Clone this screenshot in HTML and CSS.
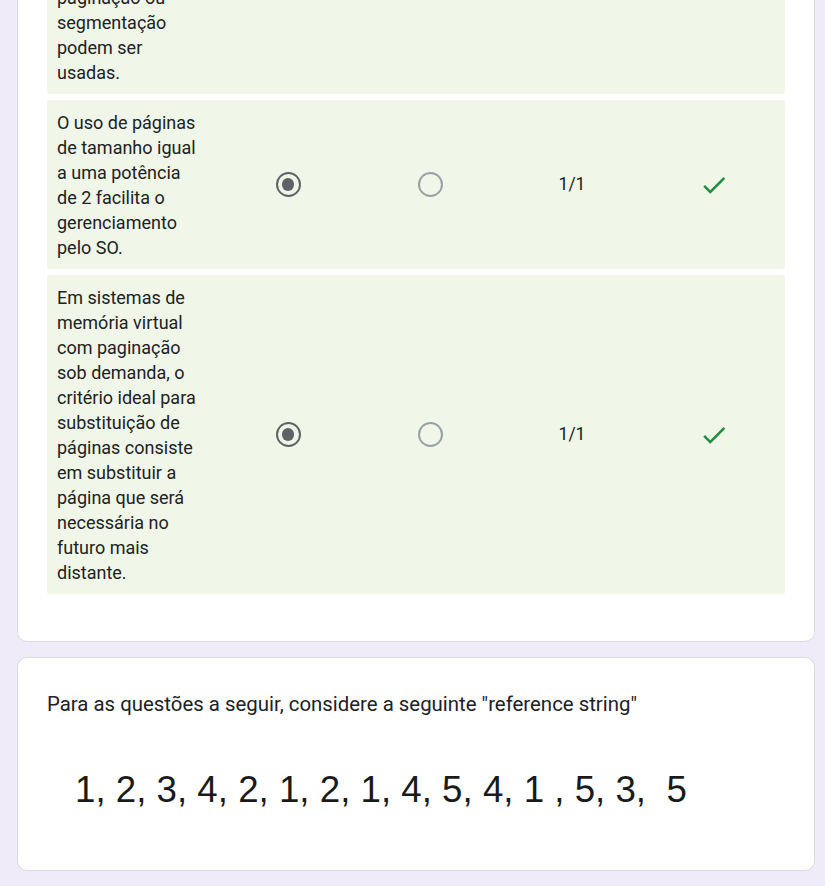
FILE: index.html
```html
<!DOCTYPE html>
<html lang="pt-BR">
<head>
<meta charset="utf-8">
<title>Formulário</title>
<link rel="stylesheet" href="styles.css">
</head>
<body>
<div class="page">
  <section class="card card-grid">
    <div class="grid">
      <div class="row">
        <div class="label">Em sistemas operacionais que implementam memória virtual, as técnicas de paginação ou segmentação podem ser usadas.</div>
        <div class="cell"><span class="radio checked"></span></div>
        <div class="cell"><span class="radio"></span></div>
        <div class="cell score">1/1</div>
        <div class="cell"><svg class="check" viewBox="0 0 24 24"><path d="M9 16.17L4.83 12l-1.42 1.41L9 19 21 7l-1.41-1.41z"/></svg></div>
      </div>
      <div class="row">
        <div class="label">O uso de páginas de tamanho igual a uma potência de 2 facilita o gerenciamento pelo SO.</div>
        <div class="cell"><span class="radio checked"></span></div>
        <div class="cell"><span class="radio"></span></div>
        <div class="cell score">1/1</div>
        <div class="cell"><svg class="check" viewBox="0 0 24 24"><path d="M9 16.17L4.83 12l-1.42 1.41L9 19 21 7l-1.41-1.41z"/></svg></div>
      </div>
      <div class="row">
        <div class="label">Em sistemas de memória virtual com paginação sob demanda, o critério ideal para substituição de páginas consiste em substituir a página que será necessária no futuro mais distante.</div>
        <div class="cell"><span class="radio checked"></span></div>
        <div class="cell"><span class="radio"></span></div>
        <div class="cell score">1/1</div>
        <div class="cell"><svg class="check" viewBox="0 0 24 24"><path d="M9 16.17L4.83 12l-1.42 1.41L9 19 21 7l-1.41-1.41z"/></svg></div>
      </div>
    </div>
  </section>
  <section class="card card-text">
    <p class="title">Para as questões a seguir, considere a seguinte "reference string"</p>
    <div class="sequence">1, 2, 3, 4, 2, 1, 2, 1, 4, 5, 4, 1 , 5, 3,&nbsp; 5</div>
  </section>
</div>
</body>
</html>
```
FILE: styles.css
```css
html, body {
  margin: 0;
  padding: 0;
}
body {
  background: #f0ebf8;
  font-family: Roboto, "Liberation Sans", Arial, sans-serif;
  color: #202124;
}
.page {
  margin-top: -181px;
  padding-left: 17px;
  width: 798px;
  display: flex;
  flex-direction: column;
  gap: 15px;
}
.card {
  background: #fff;
  border: 1px solid #dadce0;
  border-radius: 10px;
}
.card-grid {
  padding: 30px 29px 47px 29px;
}
.grid {
  display: flex;
  flex-direction: column;
  gap: 6px;
}
.row {
  display: grid;
  grid-template-columns: 170px repeat(4, 1fr);
  align-items: center;
  background: #f0f7e8;
  border-radius: 2px;
  padding: 9.5px 0;
}
.label {
  padding: 0 17px 0 10px;
  font-size: 18px;
  line-height: 25px;
}
.cell {
  display: flex;
  justify-content: center;
  align-items: center;
}
.score {
  font-size: 17.5px;
  line-height: 25px;
}
.radio {
  box-sizing: border-box;
  width: 25px;
  height: 25px;
  border-radius: 50%;
  border: 2.5px solid #9aa0a6;
  display: flex;
  justify-content: center;
  align-items: center;
}
.radio.checked {
  border-color: #5f6368;
}
.radio.checked::after {
  content: "";
  width: 12.5px;
  height: 12.5px;
  border-radius: 50%;
  background: #5f6368;
}
.check {
  width: 30px;
  height: 30px;
  fill: #1e8e3e;
}
.card-text {
  padding: 31px 29px 59px 29px;
}
.title {
  margin: 0;
  font-size: 20.4px;
  line-height: 30px;
}
.sequence {
  margin-top: 49px;
  padding-left: 28px;
  font-family: "Liberation Sans", Arial, sans-serif;
  font-size: 36.7px;
  line-height: 43px;
  color: #1a1a1a;
}
```
